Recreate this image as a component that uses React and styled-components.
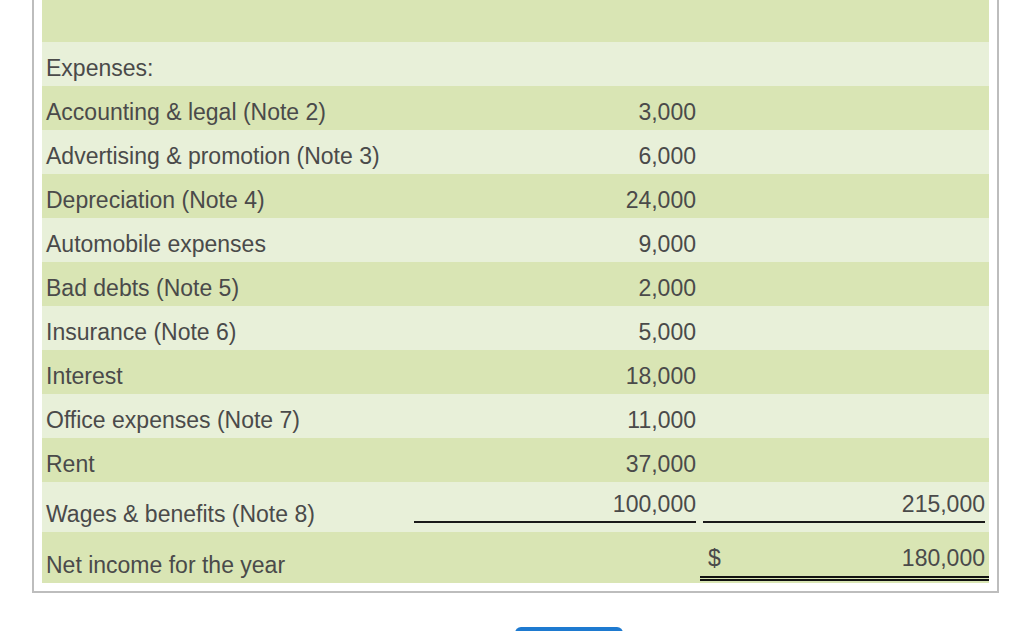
import React from "react";
import styled, { createGlobalStyle } from "styled-components";

const Global = createGlobalStyle`
  html, body {
    margin: 0;
    padding: 0;
    background: #ffffff;
    overflow: hidden;
  }
  body {
    font-family: "Liberation Sans", Arial, Helvetica, sans-serif;
  }
`;

const Page = styled.div`
  display: flex;
  flex-direction: column;
  padding-left: 32px;
`;

const Frame = styled.div`
  width: 967px;
  box-sizing: border-box;
  border: 2px solid #bdbdbd;
  border-top: none;
  padding: 0 8px 8px 8px;
`;

const Table = styled.table`
  width: 947px;
  border-collapse: collapse;
  table-layout: fixed;
  font-family: "Liberation Sans", Arial, Helvetica, sans-serif;
  font-size: 23px;
  line-height: 26px;
  color: #4a4a4a;
`;

const Row = styled.tr`
  background: ${(p) => (p.$tone === "dark" ? "#d9e5b4" : "#e8f0d9")};
  height: ${(p) => p.$h}px;
`;

const Label = styled.td`
  padding: 0 0 5px 4px;
  vertical-align: bottom;
  white-space: nowrap;
`;

const Amount = styled.td`
  padding: ${(p) => p.$pad || "0 4px 5px 6px"};
  text-align: right;
  vertical-align: bottom;
  white-space: nowrap;
`;

const Underlined = styled.span`
  display: block;
  padding-bottom: 4px;
  border-bottom: 2px solid #1a1a1a;
`;

const Total = styled.span`
  display: flex;
  justify-content: space-between;
  padding: 0 4px 5px 8px;
  border-bottom: 5px double #111111;
`;

const ButtonBar = styled.div`
  display: flex;
  padding: 34px 0 0 483px;
`;

const NavButton = styled.button`
  width: 108px;
  height: 40px;
  border: none;
  border-radius: 6px;
  background: #1e7ad0;
`;

const items = [
  ["Accounting & legal (Note 2)", "3,000"],
  ["Advertising & promotion (Note 3)", "6,000"],
  ["Depreciation (Note 4)", "24,000"],
  ["Automobile expenses", "9,000"],
  ["Bad debts (Note 5)", "2,000"],
  ["Insurance (Note 6)", "5,000"],
  ["Interest", "18,000"],
  ["Office expenses (Note 7)", "11,000"],
  ["Rent", "37,000"],
];

export default function App() {
  return (
    <>
      <Global />
      <Page>
        <Frame>
          <Table>
            <colgroup>
              <col style={{ width: 366 }} />
              <col style={{ width: 292 }} />
              <col style={{ width: 289 }} />
            </colgroup>
            <tbody>
              <Row $tone="dark" $h={42}>
                <Label />
                <Amount />
                <Amount />
              </Row>
              <Row $tone="light" $h={44}>
                <Label>Expenses:</Label>
                <Amount />
                <Amount />
              </Row>
              {items.map(([label, value], i) => (
                <Row key={label} $tone={i % 2 === 0 ? "dark" : "light"} $h={44}>
                  <Label>{label}</Label>
                  <Amount>{value}</Amount>
                  <Amount />
                </Row>
              ))}
              <Row $tone="light" $h={50}>
                <Label>Wages &amp; benefits (Note 8)</Label>
                <Amount $pad="0 4px 9px 6px">
                  <Underlined>100,000</Underlined>
                </Amount>
                <Amount $pad="0 4px 9px 3px">
                  <Underlined>215,000</Underlined>
                </Amount>
              </Row>
              <Row $tone="dark" $h={51}>
                <Label>Net income for the year</Label>
                <Amount />
                <Amount $pad="0 0 2px 0">
                  <Total>
                    <span>$</span>
                    <span>180,000</span>
                  </Total>
                </Amount>
              </Row>
            </tbody>
          </Table>
        </Frame>
        <ButtonBar>
          <NavButton aria-label="Next" />
        </ButtonBar>
      </Page>
    </>
  );
}
